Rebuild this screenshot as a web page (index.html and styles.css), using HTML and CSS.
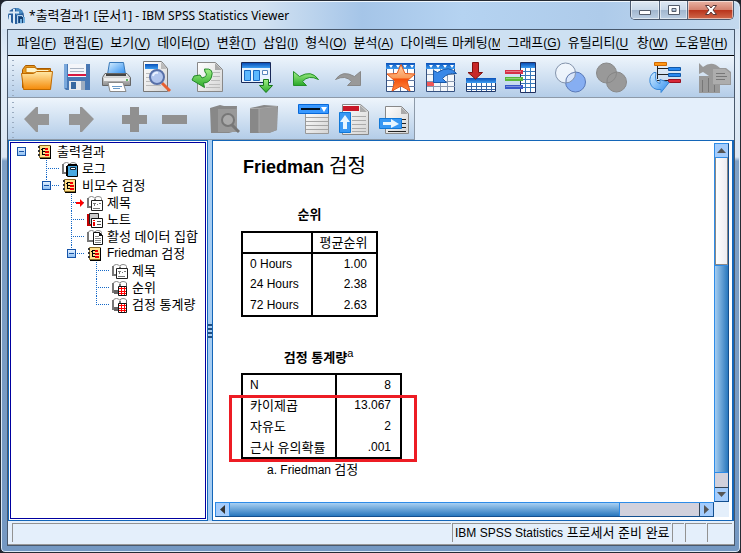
FILE: index.html
```
<!DOCTYPE html>
<html lang="ko">
<head>
<meta charset="utf-8">
<title>출력결과1 [문서1] - IBM SPSS Statistics Viewer</title>
<link rel="stylesheet" href="styles.css">
</head>
<body>
<svg class="defs" width="0" height="0" aria-hidden="true">
  <defs>
    <linearGradient id="gOrange" x1="0" y1="0" x2="0" y2="1"><stop offset="0" stop-color="#ffe9a8"/><stop offset="1" stop-color="#f58a08"/></linearGradient>
    <linearGradient id="gStar" x1="0" y1="0" x2="0" y2="1"><stop offset="0" stop-color="#ffd0a8"/><stop offset=".5" stop-color="#fa9a58"/><stop offset=".55" stop-color="#f4500c"/><stop offset="1" stop-color="#ff8a40"/></linearGradient>
    <linearGradient id="gBlue" x1="0" y1="0" x2="0" y2="1"><stop offset="0" stop-color="#0a50b8"/><stop offset="1" stop-color="#3c9cf0"/></linearGradient>
    <linearGradient id="gSky" x1="0" y1="0" x2="1" y2="1"><stop offset="0" stop-color="#d8efff"/><stop offset="1" stop-color="#2a8cf0"/></linearGradient>
    <linearGradient id="gGreen" x1="0" y1="0" x2="0" y2="1"><stop offset="0" stop-color="#a4f088"/><stop offset="1" stop-color="#28a828"/></linearGradient>
    <linearGradient id="gPage" x1="0" y1="0" x2="1" y2="1"><stop offset="0" stop-color="#ffffff"/><stop offset="1" stop-color="#d4d4d4"/></linearGradient>
    <linearGradient id="gPrint" x1="0" y1="0" x2="0" y2="1"><stop offset="0" stop-color="#f2f2f2"/><stop offset="1" stop-color="#8c8c8c"/></linearGradient>
    <symbol id="note" viewBox="0 0 16 16"><path fill="#ffe08a" stroke="#8a6a20" d="M2.500 1.500h11v12h-11z"/><path stroke="#000" d="M13.500 2v12.500M3 14.500h11M4 5.500h2M5.500 4v7M6 4.500h2M6 7.500h2M6 10.500h2"/><path stroke="#333" stroke-dasharray="2 2" stroke-width="2" d="M2 2v12"/><path stroke="#f00000" stroke-width="2" d="M8 5h3M8 8h4M8 11h4"/></symbol>
    <symbol id="books" viewBox="0 0 16 16"><path fill="#fff" stroke="#8a8a8a" d="M1.500 3.500q0-2 3-2 2.500 0 3.500 2 0-2 3-2 3.500 0 3.500 2v8h-13z"/><path stroke="#777" stroke-width="2" d="M1 3v9h5M8 4v4"/></symbol>
    <symbol id="titleIcon" viewBox="0 0 16 16"><use href="#books"/><path fill="#fff" stroke="#222" d="M4.500 5.500h11v10h-11z"/><path stroke="#777" d="M6 8.500h3M7.500 8v3M10 9.500h1M12 8.500h2M6 13.500h7"/></symbol>
    <symbol id="tableIcon" viewBox="0 0 16 16"><use href="#books"/><path fill="#666" d="M2 10h5v4H2zM14 3h1v5h-1z"/><path fill="#fff" stroke="#111" d="M6.500 6.500h8v9h-8z"/><path stroke="#f00" stroke-width="1" d="M7 8.500h7M7 11.500h7M7 13.500h7M9.500 7v8M12.500 7v8"/></symbol>
  </defs>
</svg>

<div class="window">
  <header class="titlebar">
    <svg class="app-icon" viewBox="0 0 18 18" fill="none"><circle cx="8" cy="9" r="8" fill="#285f9c"/><path fill="#4a8dc4" d="M8 1a8 8 0 0 1 7 5L8 8z"/><path stroke="#dcebf7" stroke-width="2" d="M6 2v15M0 5.500h11M2 8v7"/><path stroke="#b8d4ec" d="M9.500 8.500h5v8h-5z"/><path fill="#123e70" d="M11 10h6v6h-6z"/><path fill="#73b0df" d="M12 12h2v4h-2zM15 10h2v6h-2z"/></svg>
    <h1>*<span>출력결과</span>1 [<span>문서</span>1] - IBM SPSS Statistics Viewer</h1>
    <div class="controls">
      <button class="min" aria-label="최소화"><svg viewBox="0 0 14 12"><path fill="#fff" stroke="#555d6b" d="M1.500 6.500h11v4h-11z"/></svg></button>
      <button class="max" aria-label="최대화"><svg viewBox="0 0 14 12"><path fill="#fff" fill-rule="evenodd" stroke="#555d6b" d="M1.500 1.500h11v9h-11zM5 4.500h4v3H5z"/></svg></button>
      <button class="close" aria-label="닫기"><svg viewBox="0 0 14 12"><path fill="#fff" stroke="#5b3a3a" d="M1.500 1.500h3.500l2 2.500 2-2.500h3.500L9 6l3.500 4.500H9L7 8l-2 2.500H1.500L5 6z"/></svg></button>
    </div>
  </header>

  <div class="client">
    <nav class="menu">
      <button>파일<span>(<u>F</u>)</span></button>
      <button>편집<span>(<u>E</u>)</span></button>
      <button>보기<span>(<u>V</u>)</span></button>
      <button>데이터<span>(<u>D</u>)</span></button>
      <button>변환<span>(<u>T</u>)</span></button>
      <button>삽입<span>(<u>I</u>)</span></button>
      <button>형식<span>(<u>O</u>)</span></button>
      <button>분석<span>(<u>A</u>)</span></button>
      <button class="clip-long">다이렉트 마케팅<span>(<u>M</u></span></button>
      <button>그래프<span>(<u>G</u>)</span></button>
      <button class="clip">유틸리티<span>(<u>U</u></span></button>
      <button>창<span>(<u>W</u>)</span></button>
      <button>도움말<span>(<u>H</u>)</span></button>
    </nav>

    <div class="toolbar main-tools">
      <div class="group">
        <button aria-label="열기"><svg viewBox="0 0 32 32"><path fill="#e89a20" stroke="#a85a00" d="M1.500 8.500l3-4h9l2 3h14v19h-28z"/><path fill="#fff3c8" stroke="#c87808" d="M5 11.500V6.500h9l2 2h12v4z"/><path fill="url(#gOrange)" stroke="#c06a00" d="M.5 12.500h12l3-2h16l-2 18h-27z"/></svg></button>
        <button aria-label="저장"><svg viewBox="0 0 32 32"><path fill="#4878b4" d="M3 3h26v26H5l-2-2z"/><path fill="#7aa8dc" d="M3 3h3v24H3z"/><path fill="#f4f6fa" d="M7 3h18v13H7z"/><path stroke="#a9b4c4" d="M9 7.500h14M9 10.500h14"/><path stroke="#d81840" stroke-width="2" d="M7 14h18"/><path fill="#e8eaee" d="M8 20h16v9H8z"/><path fill="#3868a0" d="M10 21h5v7h-5z"/><path fill="#9cacc0" d="M20 20h4v9h-4z"/></svg></button>
        <button aria-label="인쇄"><svg viewBox="0 0 32 32"><path fill="url(#gSky)" stroke="#3878b8" d="M8.500 1.500h14l2 12h-18z"/><path fill="url(#gPrint)" stroke="#666" d="M4 12.500h22l3.500 4v8h-28v-8z"/><path fill="#444" d="M5 13h20v2H5z"/><path fill="#eee" d="M3 17h25v3H3z"/><path fill="#fff" stroke="#888" d="M7 21.500h15l3 9H9z"/><path stroke="#6a9ac8" d="M11 25.500h10M12 27.500h7"/><circle cx="26" cy="19" r="1" fill="#30a030"/></svg></button>
        <button aria-label="인쇄 미리보기"><svg viewBox="0 0 32 32"><path fill="url(#gPage)" stroke="#777" d="M2.500.5h18l6 7v23h-24z"/><path fill="url(#gBlue)" d="M4 3h13v5H4z"/><path fill="#bbb" d="M20 1v7h6z"/><path stroke="#bbb" d="M5 12.500h5M5 16.500h5M5 20.500h5M5 24.500h15"/><path stroke="#e86030" stroke-width="3" d="M21 22l8 8"/><circle cx="16" cy="16" r="7" fill="#a8c0ef" fill-opacity=".85" stroke="#5870a8" stroke-width="2"/><path fill="none" stroke="#e8f0ff" stroke-width="2" d="M12 15q1-4 5-3"/></svg></button>
      </div>
      <div class="group"><button aria-label="내보내기"><svg viewBox="0 0 32 32"><path fill="url(#gPage)" stroke="#888" d="M6.500 1.500h18l7 7v22h-25z"/><path fill="#aaa" d="M24 2v7h7z"/><path stroke="#bbb" d="M22 11.500h7M22 15.500h7M20 19.500h9M18 23.500h11M15 26.500h14"/><path fill="url(#gGreen)" stroke="#228828" d="M13.500 8q10-1 7 8-2 6-8 6l1 4.500L1 19l2-4 6-1 2 3q7-2 3-6z"/></svg></button></div>
      <div class="group"><button aria-label="대화상자 불러오기"><svg viewBox="0 0 32 32"><path fill="#e8f4ff" stroke="#182858" d="M.5 1.500h29v20H.500z"/><path fill="url(#gBlue)" d="M1 2h28v5H1z"/><path fill="#5cb8ff" stroke="#1868c0" d="M3.500 9.500h6v10h-6zM12.500 9.500h6v10h-6z"/><path fill="#fff" stroke="#5888bc" d="M21.500 9.500h5v4h-5z"/><path fill="url(#gGreen)" stroke="#187818" d="M22.500 18.500h5v6h4L25 31.500l-6.500-7h4z"/></svg></button></div>
      <div class="group">
        <button aria-label="실행 취소"><svg viewBox="0 0 32 32"><path fill="url(#gGreen)" stroke="#249028" d="M2.500 10.500v14h13l-4-4q6-7 16-2-7-10-19-3z"/></svg></button>
        <button aria-label="다시 실행"><svg viewBox="0 0 32 32"><path fill="#999" stroke="#888" d="M29.500 10.500v14h-13l4-4q-6-7-16-2 7-10 19-3z"/></svg></button>
      </div>
      <div class="group wide">
        <button aria-label="데이터로 이동"><svg viewBox="0 0 32 32"><path fill="#fff" stroke="#345080" d="M1.500 2.500h28v28h-28z"/><path stroke="#6078a0" d="M2 13.500h28M2 19.500h28M2 25.500h28M8.500 8v22M15.500 8v22M22.500 8v22"/><path fill="url(#gBlue)" d="M1 2h29v6H1z"/><path fill="#fff" d="M4 4h4L6 7zM11 4h4l-2 3zM18 4h4l-2 3zM25 4h4l-2 3z"/><path fill="url(#gStar)" stroke="#e85818" d="M16 3.500l4 9 10 .5-8 7 3 10-9-5-9 5 3-10-8-7 10-.5z"/></svg></button>
        <button aria-label="케이스로 이동"><svg viewBox="0 0 32 32"><path fill="#f4f7fb" stroke="#345080" d="M1.500 2.500h28v28h-28z"/><path stroke="#8898b0" d="M2 13.500h28M2 20.500h28M2 25.500h28M8.500 8v22M15.500 8v22M22.500 8v22"/><path fill="url(#gBlue)" d="M1 2h29v6H1z"/><path fill="#fff" d="M4 4h4L6 7zM11 4h4l-2 3zM18 4h4l-2 3zM25 4h4l-2 3z"/><path fill="#f05858" d="M2 21h7v4H2z"/><path fill="#3888e8" stroke="#1858a8" d="M8.500 9.500v12h13l-4-4q5-6 14-5-7-9-19-1z"/></svg></button>
        <button aria-label="변수로 이동"><svg viewBox="0 0 32 32"><path fill="#fff" stroke="#203868" d="M1.500 17.500h29v13h-29z"/><path fill="url(#gBlue)" d="M1 17h30v5H1z"/><path stroke="#3868a8" d="M2 25.500h28M2 28.500h28M6.500 22v8M11.500 22v8M16.500 22v8M21.500 22v8M26.500 22v8"/><path fill="#c82828" stroke="#801010" d="M7.500 1.500h6v10h4L10.500 18 3 11.500h4.500z"/></svg></button>
        <button aria-label="변수 정보"><svg viewBox="0 0 32 32"><path fill="#fff" stroke="#203060" d="M15.500 1.500h15v30h-15z"/><path fill="url(#gBlue)" d="M16 2h14v5H16z"/><path stroke="#3878b8" d="M16 10.500h14M16 14.500h14M16 18.500h14M16 22.500h14M16 26.500h14M20.500 7v24M25.500 7v24"/><path stroke="#d83048" stroke-width="4" d="M0 11h18"/><path stroke="#58b838" stroke-width="4" d="M0 18h18"/><path stroke="#3858c8" stroke-width="4" d="M0 26h18"/><path stroke="#fff" stroke-opacity=".35" d="M1 10.500h15M1 17.500h15M1 25.500h15"/></svg></button>
      </div>
      <div class="group">
        <button aria-label="집합 사용"><svg viewBox="0 0 32 32"><circle cx="20.500" cy="21" r="10" fill="#86aef2" stroke="#5878b8"/><circle cx="10.500" cy="12" r="10" fill="#f4f8fd" fill-opacity=".75" stroke="#8494ac"/><path fill="none" stroke="#6880b0" d="M11 22q-1-9 9.500-11"/></svg></button>
        <button aria-label="모든 변수 표시"><svg viewBox="0 0 32 32"><circle cx="21.500" cy="21" r="10" fill="#999" stroke="#888"/><circle cx="11.500" cy="12" r="10" fill="#999" stroke="#888"/><path fill="none" stroke="#858585" d="M12 22q-1-9 9.500-11"/></svg></button>
      </div>
      <div class="group wide"><button aria-label="마지막 출력 선택"><svg viewBox="0 0 32 32"><path stroke="#222" d="M8.500 4v14M8 7.500h14M8 13.500h14M8 19.500h14"/><path fill="#ff9818" stroke="#d06800" d="M5.500 1.500h12v3h-12z"/><path fill="#2888f0" stroke="#1058a8" d="M19.500 6.500h12v3h-12zM19.500 12.500h12v3h-12z"/><path fill="#d82838" stroke="#981020" d="M19.500 18.500h12v3h-12z"/><path fill="url(#gSky)" stroke="#3888d8" d="M5 11.500q-5 3-4 10 2 8 11 7v3l8-10-9-3v4q-6-1-4-11z"/></svg></button></div>
      <div class="group"><button aria-label="스크립트 실행"><svg viewBox="0 0 32 32"><path fill="#999" d="M0 2l4 4q9-7 17 1h6l5 4v13H21v8H0V15h10L4 11l-4 2z"/><path fill="#adadad" d="M14 8h12l5 4v11H14z"/><path stroke="#777" d="M17 12.500h9M17 15.500h11M17 18.500h9M3.500 19v12M9.500 17v14M15.500 24v7"/></svg></button></div>
    </div>

    <div class="toolbar outline-tools">
      <div class="group spaced">
        <button aria-label="승격"><svg viewBox="0 0 32 32"><path fill="#969696" d="M3 16L15 4h2v7h11v11H17v7h-2z"/></svg></button>
        <button aria-label="강등"><svg viewBox="0 0 32 32"><path fill="#969696" d="M29 16L17 4h-2v7H4v11h11v7h2z"/></svg></button>
      </div>
      <div class="group">
        <button aria-label="확장"><svg viewBox="0 0 32 32"><path fill="#909090" d="M12 4h9v8h8v9h-8v8h-9v-8H4v-9h8z"/></svg></button>
        <button aria-label="축소"><svg viewBox="0 0 32 32"><path fill="#909090" d="M4 12h25v9H4z"/></svg></button>
      </div>
      <div class="group">
        <button aria-label="표시"><svg viewBox="0 0 32 32"><path fill="#888" d="M2 5L12 2l4 1 13 0-1 25-7 2H3z"/><path fill="#999" d="M10 6h19v23H10z"/><circle cx="20" cy="17" r="6" fill="#aaa" stroke="#777" stroke-width="2"/><path stroke="#777" stroke-width="3" d="M24 22l7 7"/></svg></button>
        <button aria-label="숨기기"><svg viewBox="0 0 32 32"><path fill="#888" d="M2 5L16 2l14 1-1 24-8 3H2z"/><path fill="#999" d="M11 6l18-2v23l-8 3H11z"/><path fill="none" stroke="#a8a8a8" d="M2 5.500h9v24M11 5.500l18-2"/></svg></button>
      </div>
      <div class="group">
        <button aria-label="제목 삽입"><svg viewBox="0 0 32 32"><path fill="url(#gPage)" stroke="#999" d="M7.500 5.500h23v25h-23z"/><path stroke="#a4a4a4" d="M8 14.500h22M8 18.500h22M8 22.500h22M8 26.500h22"/><path fill="#3898ff" stroke="#0868d8" d="M.5 1.500h30v9H.500z"/><path stroke="#001020" stroke-width="2" d="M3 6h19"/><path fill="#fff" d="M23 4h6l-3 5z"/></svg></button>
        <button aria-label="새 제목"><svg viewBox="0 0 32 32"><path fill="url(#gPage)" stroke="#888" d="M4.500 1.500h18l8 7v23h-26z"/><path fill="#aaa" d="M22 2v7h7z"/><path fill="#c81828" d="M5 3h16v5H5z"/><path stroke="#aaa" d="M14 13.500h14M14 17.500h14M14 21.500h14M14 25.500h14M14 28.500h14"/><path fill="#3898f4" stroke="#1078d8" d="M1.500 9.500h11v20h-11z"/><path fill="#e8f6ff" d="M7 12l-5 7h3v7h4v-7h3z"/></svg></button>
        <button aria-label="새 텍스트"><svg viewBox="0 0 32 32"><path fill="url(#gPage)" stroke="#888" d="M7.500 3.500h16l7 7v20h-23z"/><path fill="#aaa" d="M23 4v7h7z"/><path stroke="#222" d="M24 16.500h4M24 20.500h4M24 24.500h4M10 28.500h18"/><path fill="#3898f4" stroke="#1078d8" d="M1.500 15.500h22v10h-22z"/><path fill="#e8f6ff" d="M5 19h8v-3l8 5-8 4v-3H5z"/></svg></button>
      </div>
    </div>

    <main class="panes">
      <aside class="outline">
        <ul class="tree">
          <li><div class="row"><span class="slot"><button class="toggle" aria-label="접기"></button></span><svg fill="none"><use href="#note"/></svg>출력결과</div>
            <ul>
              <li><div class="row"><span class="slot line"></span><svg fill="none" viewBox="0 0 16 16"><use href="#books"/><path fill="#48a8e0" stroke="#000" d="M5.500 4.500h10v11h-10z"/><path stroke="#000" stroke-width="2" d="M5 5v10M6 4h9"/><path fill="#fff" stroke="#123" d="M8.500 6.500h5v2h-5z"/></svg>로그</div></li>
              <li><div class="row"><span class="slot line last"><button class="toggle" aria-label="접기"></button></span><svg fill="none"><use href="#note"/></svg>비모수 검정</div>
                <ul>
                  <li><div class="row"><span class="slot line"><svg class="pointer" viewBox="0 0 8 8"><path fill="#f00" d="M0 3h4V0l4 4-4 4V5H0z"/></svg></span><svg fill="none"><use href="#titleIcon"/></svg>제목</div></li>
                  <li><div class="row"><span class="slot line"></span><svg fill="none" viewBox="0 0 16 16"><path fill="#ccc" stroke="#222" d="M2.500 1.500h9v11h-9z"/><path stroke="#c00000" stroke-width="2" d="M1 2v11h5"/><path fill="#fff" stroke="#111" d="M4.500 6.500h11v9h-11z"/><path stroke="#e00" stroke-width="2" d="M7 8v1M7 10v4"/><path stroke="#555" d="M10 9.500h4M10 12.500h4"/></svg>노트</div></li>
                  <li><div class="row"><span class="slot line"></span><svg fill="none" viewBox="0 0 16 16"><use href="#books"/><path fill="#fff" stroke="#111" d="M6.500 3.500h6l3 3v9h-9z"/><path fill="#111" d="M12 3v4h4z"/><path stroke="#888" d="M8 7.500h4M8 9.500h6M8 11.500h6M8 13.500h6"/></svg>활성 데이터 집합</div></li>
                  <li><div class="row"><span class="slot line last"><button class="toggle" aria-label="접기"></button></span><svg fill="none"><use href="#note"/></svg><span class="en">Friedman</span>&nbsp;검정</div>
                    <ul>
                      <li><div class="row"><span class="slot line"></span><svg fill="none"><use href="#titleIcon"/></svg>제목</div></li>
                      <li><div class="row"><span class="slot line"></span><svg fill="none"><use href="#tableIcon"/></svg>순위</div></li>
                      <li><div class="row"><span class="slot line last"></span><svg fill="none"><use href="#tableIcon"/></svg>검정 통계량</div></li>
                    </ul>
                  </li>
                </ul>
              </li>
            </ul>
          </li>
        </ul>
      </aside>
      <div class="splitter"><i></i></div>
      <section class="viewer">
        <div class="document">
          <h2>Friedman <span>검정</span></h2>
          <table class="ranks">
            <caption>순위</caption>
            <thead><tr><th></th><th class="ko">평균순위</th></tr></thead>
            <tbody>
              <tr><td>0 Hours</td><td>1.00</td></tr>
              <tr><td>24 Hours</td><td>2.38</td></tr>
              <tr><td>72 Hours</td><td>2.63</td></tr>
            </tbody>
          </table>
          <div class="stats">
            <h3>검정 통계량<sup>a</sup></h3>
            <div class="marked">
              <table>
                <tbody>
                  <tr><td>N</td><td>8</td></tr>
                  <tr><td class="ko">카이제곱</td><td>13.067</td></tr>
                  <tr><td class="ko">자유도</td><td>2</td></tr>
                  <tr><td class="ko">근사 유의확률</td><td>.001</td></tr>
                </tbody>
              </table>
              <div class="highlight"></div>
            </div>
            <p>a. Friedman <span class="ko">검정</span></p>
          </div>
        </div>
        <div class="scroll vertical">
          <button aria-label="위로"><svg viewBox="0 0 9 5"><path fill="#555" d="M4.500 0L9 5H0z"/></svg></button>
          <div class="track"></div><div class="thumb"></div><div class="rest"></div>
          <button aria-label="아래로"><svg viewBox="0 0 9 5"><path fill="#555" d="M0 0h9L4.500 5z"/></svg></button>
        </div>
        <div class="scroll horizontal">
          <button aria-label="왼쪽"><svg viewBox="0 0 5 9"><path fill="#333" d="M5 0v9L0 4.500z"/></svg></button>
          <div class="thumb"></div><div class="rest"></div>
          <button aria-label="오른쪽"><svg viewBox="0 0 5 9"><path fill="#555" d="M0 0l5 4.500L0 9z"/></svg></button>
        </div>
        <div class="corner"></div>
      </section>
    </main>

    <footer class="status">
      <div class="fill"></div>
      <div class="message"><span class="en">IBM SPSS Statistics</span> 프로세서 준비 완료</div>
      <div class="small"></div><div class="medium"></div><div class="large"></div>
    </footer>
  </div>
</div>
</body>
</html>
```
FILE: styles.css
```
* { box-sizing: border-box; }
body {
  margin: 0;
  background: #20242c;
  color: #000;
  font: 13px/17px "Liberation Sans", "Noto Sans CJK KR", sans-serif;
}
h1, h2, h3, p, ul { margin: 0; padding: 0; font-weight: normal; }
ul { list-style: none; }
button { margin: 0; padding: 0; border: 0; background: none; color: inherit; font: inherit; }
svg { display: block; flex: none; }
.defs { position: absolute; }
.en { font-size: 12px; }
.ko { font-size: 13px; }

.window {
  display: flex;
  flex-direction: column;
  height: 100vh;
  padding: 0 5px 6px 6px;
  border: 1px solid #252b34;
  border-radius: 7px 7px 5px 5px;
  box-shadow: inset 0 0 0 1px #dbe9f6;
  background: linear-gradient(#c3d8ee 0, #e2edf8 60px, #dce7f3 156px, #7fa1c6 160px, #7498c2 100%);
}

/* Title bar */
.titlebar {
  display: flex;
  flex: none;
  height: 28px;
  margin: 0 -4px 0 -5px;
  padding: 0 5px 0 6px;
  border-top: 1px solid #eef6fd;
  border-radius: 6px 6px 0 0;
  background: linear-gradient(90deg, #dce8f4 0, #d2e2f2 260px, #a5c5e8 360px, #b5d3f1 460px, #aecbea 600px, #c3d9ee 100%);
}
.app-icon { width: 18px; height: 18px; margin-top: 5px; }
.titlebar h1 { flex: 1; margin-left: 3px; font: 12px/26px "Noto Sans", sans-serif; white-space: pre; }
.titlebar h1 span { font-family: "Noto Sans CJK KR", sans-serif; font-size: 13px; }
.controls {
  display: flex;
  height: 19px;
  margin-top: -1px;
  border: 1px solid #4c5a6e;
  border-top: 0;
  border-radius: 0 0 5px 5px;
  overflow: hidden;
}
.controls button {
  display: flex;
  align-items: center;
  justify-content: center;
  width: 28px;
  box-shadow: inset 0 0 0 1px #ffffff88;
  background: linear-gradient(#dfe9f3 0, #c9d8e8 48%, #a1b6ce 50%, #bccfe3 100%);
}
.controls button + button { border-left: 1px solid #56667c; }
.controls svg { width: 14px; height: 12px; }
.controls .close { width: 46px; background: linear-gradient(#e9b3a4 0, #d4826f 48%, #b8321a 50%, #d06a4c 100%); }

.client {
  display: flex;
  flex: 1;
  flex-direction: column;
  min-height: 0;
  border: 1px solid #48586c;
  background: #e4effb;
}

/* Menu */
.menu {
  display: flex;
  flex: none;
  gap: 7px;
  height: 26px;
  padding-left: 9px;
  overflow: hidden;
  border-bottom: 1px solid #000;
  background: #cde0f2;
  white-space: nowrap;
}
.menu span { font-size: 12px; }
.menu u { text-underline-offset: 2px; }
.menu button { flex: none; text-align: left; }
.menu .clip-long { width: 100px; overflow: hidden; }
.menu .clip { width: 62px; overflow: hidden; }

/* Toolbars */
.toolbar {
  display: flex;
  flex: none;
  align-items: center;
  gap: 18px;
  height: 42px;
  padding-left: 13px;
  border-bottom: 1px solid #8d9aa9;
  background:
    radial-gradient(circle, #9aabc0 1px, transparent 1px) 3px 2px / 4px 5px repeat-y,
    linear-gradient(#eef5fc, #b4cde8);
}
.group { display: flex; gap: 8px; }
.group.wide { margin-left: 4px; }
.group.spaced { gap: 12px; margin-right: 3px; }
.toolbar svg { width: 32px; height: 32px; }
.main-tools { overflow: hidden; }
.outline-tools { align-self: flex-start; padding-right: 4px; border-right: 1px solid #8d9aa9; }

/* Panes */
.panes { display: flex; flex: 1; min-height: 0; }
.outline {
  flex: none;
  width: 200px;
  padding: 1px;
  border: 1px solid #1466b8;
  background: #fff;
}
.tree { height: 100%; padding-left: 6px; border: 1px solid #0000a0; }
.tree ul { margin-left: 25px; }
.row { display: flex; align-items: center; height: 17px; white-space: nowrap; }
.row > svg { width: 16px; height: 16px; margin-right: 4px; }
.slot { display: flex; flex: none; align-items: center; width: 20px; height: 17px; }
.line {
  background:
    repeating-linear-gradient(#1468c8 0 1px, transparent 1px 2px) 4px 0 / 1px 100% no-repeat,
    repeating-linear-gradient(90deg, #1468c8 0 1px, transparent 1px 2px) 4px 8px / 14px 1px no-repeat;
}
.line.last { background-size: 1px 9px, 14px 1px; }
.toggle {
  width: 9px;
  height: 9px;
  border: 1px solid #1754a8;
  background: linear-gradient(#1754a8, #1754a8) center / 5px 1px no-repeat, linear-gradient(#e4f1ff, #8fc0f4);
}
.pointer { width: 8px; height: 8px; margin-left: 9px; }
.splitter { display: flex; flex: none; align-items: center; width: 4px; background: #a5cdf3; }
.splitter i { width: 4px; height: 14px; background: repeating-linear-gradient(#204c80 0 2px, #a5cdf3 2px 4px); }

.viewer {
  display: grid;
  flex: 1;
  grid-template: minmax(0, 1fr) 15px / minmax(0, 1fr) 15px;
  min-width: 0;
  padding: 2px 3px 3px 2px;
  border: 1px solid #1466b8;
  border-right-width: 2px;
  background: #fff;
}
.document { padding: 11px 0 0 26px; overflow: hidden; font-size: 12px; }
.document h2 { margin-left: 2px; font-size: 18px; line-height: 24px; font-weight: bold; }
.document h2 span { font-size: 20px; font-weight: normal; }
.document table { border: 2px solid #000; border-collapse: collapse; }
.document caption { height: 26px; padding-top: 1px; font-size: 13px; font-weight: bold; }
.document td { height: 21px; padding: 0 9px 0 7px; line-height: 17px; white-space: nowrap; }
.document td + td, .document th + th { border-left: 2px solid #000; }
.document td + td { text-align: right; }
.ranks { width: 137px; margin-top: 26px; }
.ranks th { height: 21px; padding: 0 8px 0 6px; border-bottom: 2px solid #000; font-weight: normal; line-height: 17px; }
.ranks th:first-child { width: 70px; }
.stats { width: 161px; margin-top: 28px; }
.stats h3 { height: 28px; margin-left: -6px; font-size: 13px; font-weight: bold; line-height: 26px; text-align: center; }
.stats sup { font-size: 11px; font-weight: normal; line-height: 0; }
.stats table { width: 161px; }
.stats td:first-child { width: 94px; }
.stats p { margin: 2px 0 0 26px; white-space: nowrap; }
.marked { position: relative; }
.highlight { position: absolute; top: 22px; right: -15px; bottom: -3px; left: -12px; border: 3px solid #ed1c24; }

/* Scroll bars */
.scroll { display: flex; border: 1px solid #2e8ce8; border-right-color: #134f8f; border-bottom-color: #134f8f; background: #d2d1dc; }
.scroll button { display: flex; flex: none; align-items: center; justify-content: center; background: #a4ccfc; }
.vertical { flex-direction: column; }
.vertical button { width: 13px; height: 13px; }
.vertical svg, .horizontal svg { width: 9px; height: 9px; }
.vertical .track { flex: 108; border: 1px solid #888; border-top-color: #2e8ce8; background: linear-gradient(90deg, #fff, #ececf0); }
.vertical .thumb { flex: 210; border-top: 1px solid #2e8ce8; background: linear-gradient(90deg, #a5ccef, #2877bd); }
.vertical .rest { flex: 14; border-top: 1px solid #2e8ce8; border-bottom: 1px solid #345; }
.horizontal button { width: 13px; height: 13px; }
.horizontal .thumb { flex: 392; border: solid #2e8ce8; border-width: 0 1px; background: linear-gradient(#a9d0f2, #2877bd); }
.horizontal .rest { flex: 80; border-right: 1px solid #345; }
.corner { background: #e4effb; }

/* Status bar */
.status { display: flex; flex: none; gap: 1px; height: 24px; padding: 2px 2px 2px 4px; border-bottom: 1px solid #999; white-space: nowrap; }
.status div { flex: none; border: solid #929292; border-width: 1px 0 0 1px; }
.status .fill { flex: 1; }
.status .message { width: 219px; padding-left: 2px; }
.status .small { width: 12px; }
.status .medium { width: 21px; }
.status .large { width: 25px; }
```
